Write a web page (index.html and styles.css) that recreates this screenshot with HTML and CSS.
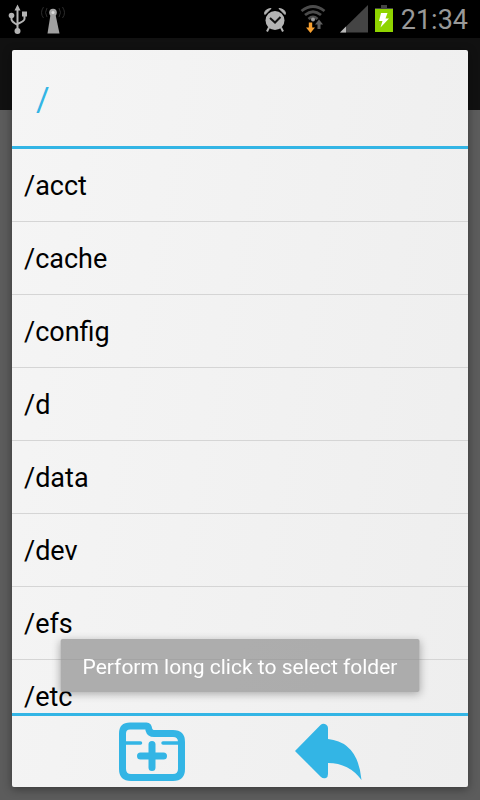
FILE: index.html
```
<!DOCTYPE html>
<html lang="en">
<head>
  <meta charset="UTF-8">
  <title>Select folder</title>
  <meta name="viewport" content="width=device-width, initial-scale=1.0">
  <link rel="stylesheet" href="styles.css">
</head>
<body>
  <header class="status-bar">
    <div class="status-left">
      <svg width="20" height="32" viewBox="0 0 20 32" fill="#b4b4b4" stroke="#b4b4b4">
        <path d="M9.500 6V28M3.500 12v4.500q0 2 6 5.500M16.500 11v5q0 2-7 5" fill="none" stroke-width="2"/>
        <path d="M9.500 1.500L6.500 7.500h6z" stroke="none"/>
        <circle cx="3.500" cy="12.500" r="2.800" stroke="none"/>
        <circle cx="9.500" cy="28" r="3" stroke="none"/>
        <path d="M14 8.500h5v5h-5z" stroke="none"/>
      </svg>
      <svg width="28" height="32" viewBox="0 0 28 32">
        <circle cx="13" cy="9.500" r="3.800" fill="#a8a8a8"/>
        <path d="M10.500 11.500h5l4 19H7.500z" fill="#a0a0a0"/>
        <circle cx="13" cy="9.500" r="1.500" fill="#ddd"/>
        <path d="M7 5q-3 4.500 0 9M3.500 4q-4 6 0 11M19 5q3 4.500 0 9M22.500 4q4 6 0 11" fill="none" stroke="#2c2c2c"/>
      </svg>
    </div>
    <div class="status-right">
      <svg class="alarm" width="24" height="26" viewBox="0 0 24 26">
        <g fill="#b4b4b4">
          <path d="M1.500 6.500Q2 2 8 1.500L2 7.500zM22.500 6.500Q22 2 16 1.500L22 7.500z" stroke="#b4b4b4"/>
          <circle cx="12" cy="13.500" r="9.500"/>
        </g>
        <path d="M6 20.500L4 24.500M18 20.500L20 24.500" stroke="#b4b4b4" stroke-width="2"/>
        <path d="M7 11l5 4.500 5.500-5.500" fill="none" stroke="#111" stroke-width="2"/>
      </svg>
      <svg class="wifi" width="26" height="28" viewBox="0 0 26 28">
        <path d="M1.500 6q11.500-9 23 0M5 10q8-6.500 16 0M8.500 14q4.500-4 9 0" fill="none" stroke="#4c4c4c" stroke-width="2.800"/>
        <circle cx="13" cy="14.500" r="2" fill="#999"/>
        <path d="M8.800 17.500h3.400v5h2.800l-4.500 5.500-4.500-5.500h2.800z" fill="#f7a030"/>
        <path d="M17.500 24v-4.500h-2.500l4-5 4 5h-2.500V24z" fill="#606060"/>
      </svg>
      <svg class="signal" width="28" height="28" viewBox="0 0 28 28">
        <path d="M28 0v27.500H0z" fill="#444"/>
        <path d="M6 21.500v6H0z" fill="#b8b8b8"/>
      </svg>
      <svg class="battery" width="18" height="28" viewBox="0 0 18 28">
        <path d="M6 0h6v4H6z" fill="#444"/>
        <path d="M0 3.500h18V27H0z" fill="#8fd400"/>
        <path d="M0 3h18v1H0z" fill="#444"/>
        <path d="M6 8h6.500l-2 5.500h3.500L5.500 22.500l2-6.500H4z" fill="#fff"/>
      </svg>
      <span class="clock">21:34</span>
    </div>
  </header>

  <main class="dialog">
    <h1 class="path">/</h1>
    <ul class="folder-list">
      <li><button class="folder">/acct</button></li>
      <li><button class="folder">/cache</button></li>
      <li><button class="folder">/config</button></li>
      <li><button class="folder">/d</button></li>
      <li><button class="folder">/data</button></li>
      <li><button class="folder">/dev</button></li>
      <li><button class="folder">/efs</button></li>
      <li><button class="folder">/etc</button></li>
    </ul>
    <footer class="actions">
      <button class="action" aria-label="New folder">
        <svg width="68" height="60" viewBox="0 0 68 60" fill="none" stroke="#33b5e5" stroke-linecap="round">
          <path d="M4.500 11.500Q4.500 4 12 4h16.500Q30.500 4 31 8Q32 11.500 36 11.500H55Q63.500 11.500 63.500 20V47Q63.500 55.500 55 55.500H13Q4.500 55.500 4.500 47z" stroke-width="7"/>
          <path d="M6 21H22.500M45 21H62" stroke-width="3.500"/>
          <path d="M34 22.500V45.500M22.500 34H45.500" stroke-width="7"/>
        </svg>
      </button>
      <button class="action" aria-label="Back">
        <svg width="68" height="60" viewBox="0 0 68 60" fill="#33b5e5">
          <path d="M1 29L26.500 3Q29 1 32 2.500Q34 3.500 34 6V17Q64 20 67.500 58Q55 41 34 41V52Q34 55 32 56Q29 57 27 55z"/>
        </svg>
      </button>
    </footer>
  </main>

  <div class="toast" role="status">Perform long click to select folder</div>
</body>
</html>
```

FILE: styles.css
```
* {
  box-sizing: border-box;
}

body {
  margin: 0;
  height: 100vh;
  display: flex;
  flex-direction: column;
  /* dimmed activity with its action bar */
  background: linear-gradient(#111 110px, #5c5c5c 110px);
  font-family: Roboto, sans-serif;
  font-variant-ligatures: none;
  overflow: hidden;
}

button {
  border: none;
  background: none;
  font-family: inherit;
  cursor: pointer;
}

svg {
  display: block;
}

.status-bar {
  height: 38px;
  flex: none;
  display: flex;
  justify-content: space-between;
  padding: 0 12px 0 8px;
  background: #000;
}

.status-left,
.status-right {
  display: flex;
  align-items: center;
}

.status-left {
  gap: 12px;
}

.alarm {
  margin-top: 2px;
}

.wifi {
  margin-left: 13px;
}

.signal {
  margin-left: 14px;
}

.battery {
  margin: 0 8px 0 7px;
}

.clock {
  padding-top: 2px;
  font-size: 27px;
  line-height: 36px;
  color: #999;
}

.dialog {
  flex: 1;
  min-height: 0;
  display: flex;
  flex-direction: column;
  margin: 12px 12px 13px;
  border-radius: 2px;
  background: linear-gradient(100deg, #f5f5f5, #eee);
  box-shadow: 0 2px 10px rgba(0, 0, 0, 0.4);
}

.path {
  margin: 0;
  padding: 4px 24px 0;
  border-bottom: 3px solid #33b5e5;
  font-size: 33px;
  font-weight: normal;
  line-height: 92px;
  color: #33b5e5;
}

.folder-list {
  flex: 1;
  min-height: 0;
  margin: 0;
  padding: 0;
  list-style: none;
  overflow: hidden;
}

.folder {
  display: block;
  width: 100%;
  padding: 2px 12px 0;
  border-bottom: 1px solid #d5d5d5;
  font-size: 27px;
  line-height: 70px;
  text-align: left;
  color: #000;
}

.actions {
  flex: none;
  display: flex;
  justify-content: center;
  gap: 108px;
  height: 74px;
  border-top: 3px solid #33b5e5;
}

.action {
  display: flex;
  align-items: center;
  padding: 0;
}

.toast {
  position: fixed;
  left: 50%;
  bottom: 108px;
  transform: translateX(-50%);
  padding: 16px 22px 12px;
  border-radius: 2px;
  background: rgba(140, 140, 140, 0.68);
  box-shadow: 0 2px 8px rgba(0, 0, 0, 0.3);
  font-size: 21px;
  line-height: 25px;
  white-space: nowrap;
  color: #fff;
}
```
